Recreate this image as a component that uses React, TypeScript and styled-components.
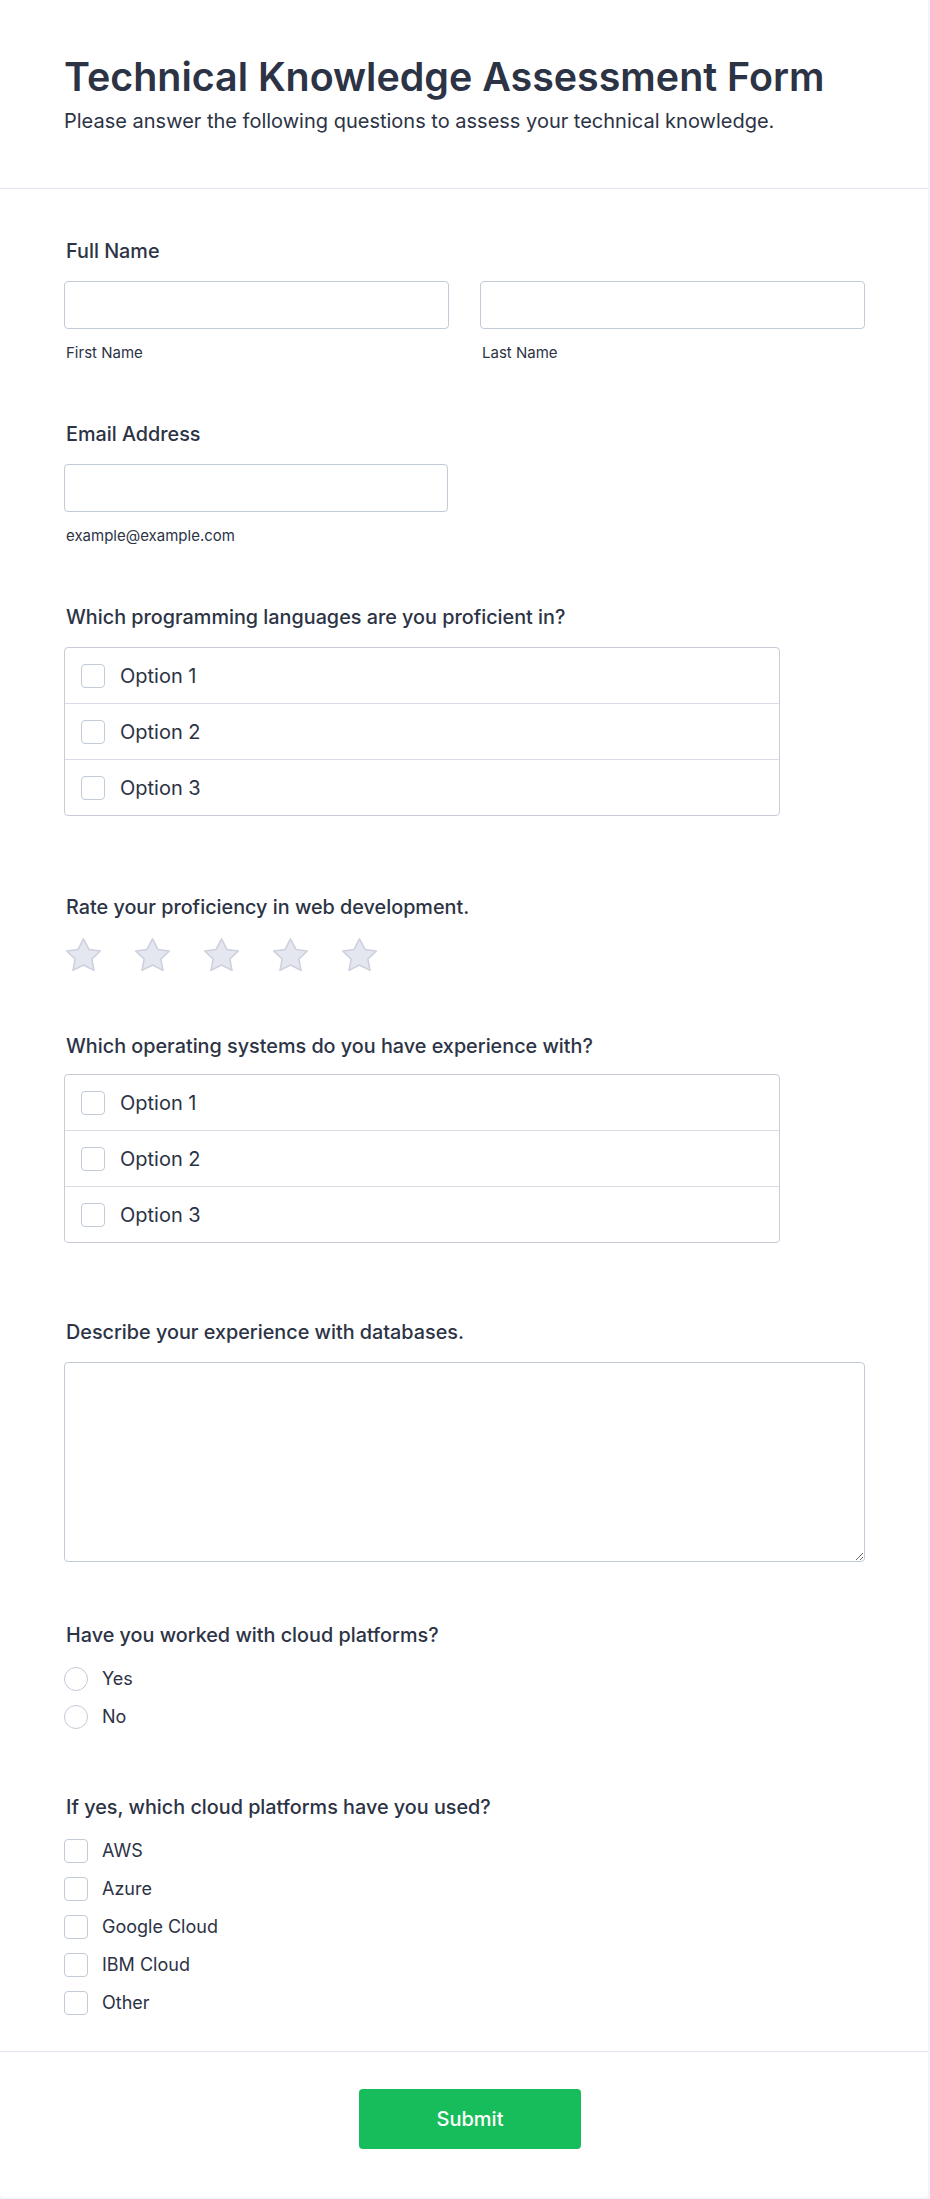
import React from "react";
import styled, { createGlobalStyle } from "styled-components";

const GlobalStyle = createGlobalStyle`
  html, body {
    margin: 0;
    padding: 0;
    background: #f3f3fe;
  }
  body {
    font-family: Inter, "Noto Sans", "Liberation Sans", sans-serif;
    color: #2c3345;
  }
  * {
    box-sizing: border-box;
  }
`;

const languageOptions = ["Option 1", "Option 2", "Option 3"];
const osOptions = ["Option 1", "Option 2", "Option 3"];
const cloudOptions = ["AWS", "Azure", "Google Cloud", "IBM Cloud", "Other"];

const StarIcon: React.FC = () => (
  <StarSvg viewBox="1.5 1.5 21 20" width="37" height="35">
    <polygon
      points="12 2.6 15.09 8.6 21.6 9.5 16.8 14.1 18 20.6 12 17.5 6 20.6 7.2 14.1 2.4 9.5 8.91 8.6"
      fill="#e4e6f0"
      stroke="#cdd1dd"
      strokeWidth="0.9"
      strokeLinejoin="round"
    />
  </StarSvg>
);

export default function App() {
  return (
    <>
      <GlobalStyle />
      <Page>
        <Card>
          <Header>
            <Title>Technical Knowledge Assessment Form</Title>
            <Subtitle>
              Please answer the following questions to assess your technical knowledge.
            </Subtitle>
          </Header>

          <FormBody>
            <Field $after={60}>
              <Label>Full Name</Label>
              <TwoColumns>
                <div>
                  <TextInput type="text" />
                  <SubLabel>First Name</SubLabel>
                </div>
                <div>
                  <TextInput type="text" />
                  <SubLabel>Last Name</SubLabel>
                </div>
              </TwoColumns>
            </Field>

            <Field $after={60}>
              <Label>Email Address</Label>
              <HalfWidth>
                <TextInput type="email" />
                <SubLabel>example@example.com</SubLabel>
              </HalfWidth>
            </Field>

            <Field $after={79}>
              <Label>Which programming languages are you proficient in?</Label>
              <OptionGroup>
                {languageOptions.map((option) => (
                  <OptionRow key={option}>
                    <CheckBox type="checkbox" />
                    <OptionText>{option}</OptionText>
                  </OptionRow>
                ))}
              </OptionGroup>
            </Field>

            <Field $after={62}>
              <Label>Rate your proficiency in web development.</Label>
              <StarRow>
                {[1, 2, 3, 4, 5].map((n) => (
                  <StarIcon key={n} />
                ))}
              </StarRow>
            </Field>

            <Field $after={77}>
              <Label $gap={16}>Which operating systems do you have experience with?</Label>
              <OptionGroup>
                {osOptions.map((option) => (
                  <OptionRow key={option}>
                    <CheckBox type="checkbox" />
                    <OptionText>{option}</OptionText>
                  </OptionRow>
                ))}
              </OptionGroup>
            </Field>

            <Field $after={61}>
              <Label>Describe your experience with databases.</Label>
              <TextArea />
            </Field>

            <Field $after={64}>
              <Label>Have you worked with cloud platforms?</Label>
              <ChoiceList>
                <Choice>
                  <RadioButton type="radio" name="cloud" />
                  <ChoiceText>Yes</ChoiceText>
                </Choice>
                <Choice>
                  <RadioButton type="radio" name="cloud" />
                  <ChoiceText>No</ChoiceText>
                </Choice>
              </ChoiceList>
            </Field>

            <Field $after={34}>
              <Label>If yes, which cloud platforms have you used?</Label>
              <ChoiceList>
                {cloudOptions.map((option) => (
                  <Choice key={option}>
                    <CheckBox type="checkbox" />
                    <ChoiceText>{option}</ChoiceText>
                  </Choice>
                ))}
              </ChoiceList>
            </Field>
          </FormBody>

          <Footer>
            <SubmitButton type="button">Submit</SubmitButton>
          </Footer>
        </Card>
      </Page>
    </>
  );
}

const Page = styled.div`
  width: 930px;
  min-height: 2199px;
  background: #f3f3fe;
`;

const Card = styled.div`
  width: 928px;
  background: #ffffff;
  border-radius: 0 0 4px 4px;
`;

const Header = styled.div`
  padding: 53px 64px 55px;
  border-bottom: 1px solid #e3e5ef;
`;

const Title = styled.h1`
  margin: 0;
  font-size: 39.4px;
  line-height: 48px;
  font-weight: 600;
  color: #2c3345;
`;

const Subtitle = styled.p`
  margin: 8px 0 0;
  font-size: 20px;
  line-height: 24px;
  font-weight: 400;
  color: #2c3345;
`;

const FormBody = styled.div`
  padding: 50px 64px 0;
`;

const Field = styled.div<{ $after: number }>`
  display: flex;
  flex-direction: column;
  margin-bottom: ${(p) => p.$after}px;
`;

const Label = styled.label<{ $gap?: number }>`
  display: block;
  margin-bottom: ${(p) => p.$gap ?? 18}px;
  padding-left: 2px;
  font-size: 19.8px;
  line-height: 24px;
  font-weight: 500;
  color: #2c3345;
`;

const TwoColumns = styled.div`
  display: grid;
  grid-template-columns: 385px 385px;
  column-gap: 31px;
`;

const HalfWidth = styled.div`
  width: 384px;
`;

const TextInput = styled.input`
  display: block;
  width: 100%;
  height: 48px;
  padding: 0 12px;
  border: 1px solid #c3cad8;
  border-radius: 4px;
  background: #ffffff;
  font-family: inherit;
  font-size: 16px;
  color: #2c3345;
  outline: none;
`;

const SubLabel = styled.div`
  margin-top: 15px;
  padding-left: 2px;
  font-size: 15px;
  line-height: 18px;
  color: #2c3345;
`;

const OptionGroup = styled.div`
  width: 716px;
  border: 1px solid #c8ccd6;
  border-radius: 4px;
  overflow: hidden;
`;

const OptionRow = styled.div`
  display: flex;
  align-items: center;
  gap: 15px;
  height: 56px;
  padding: 0 16px;
  border-top: 1px solid #d9dce4;

  &:first-child {
    height: 55px;
    border-top: none;
  }
`;

const CheckBox = styled.input`
  appearance: none;
  flex: none;
  width: 24px;
  height: 24px;
  margin: 0;
  border: 1px solid #c3cad8;
  border-radius: 4px;
  background: #ffffff;
`;

const RadioButton = styled.input`
  appearance: none;
  flex: none;
  width: 24px;
  height: 24px;
  margin: 0;
  border: 1px solid #c3cad8;
  border-radius: 50%;
  background: #ffffff;
`;

const OptionText = styled.span`
  font-size: 20px;
  line-height: 24px;
  color: #2c3345;
`;

const StarRow = styled.div`
  display: flex;
  gap: 32px;
  padding-left: 1px;
`;

const StarSvg = styled.svg`
  display: block;
  flex: none;
`;

const TextArea = styled.textarea`
  display: block;
  width: 801px;
  height: 200px;
  padding: 10px 12px;
  border: 1px solid #c3cad8;
  border-radius: 4px;
  font-family: inherit;
  font-size: 16px;
  color: #2c3345;
  outline: none;
`;

const ChoiceList = styled.div`
  display: flex;
  flex-direction: column;
  gap: 10px;
`;

const Choice = styled.div`
  display: flex;
  align-items: center;
  gap: 14px;
  height: 28px;
`;

const ChoiceText = styled.span`
  font-size: 18px;
  line-height: 24px;
  color: #2c3345;
`;

const Footer = styled.div`
  display: flex;
  justify-content: center;
  padding: 37px 0 49px 12px;
  border-top: 1px solid #e3e5ef;
`;

const SubmitButton = styled.button`
  width: 222px;
  height: 60px;
  border: none;
  border-radius: 4px;
  background: #18bd5b;
  color: #ffffff;
  font-family: inherit;
  font-size: 20px;
  font-weight: 500;
  cursor: pointer;
`;
